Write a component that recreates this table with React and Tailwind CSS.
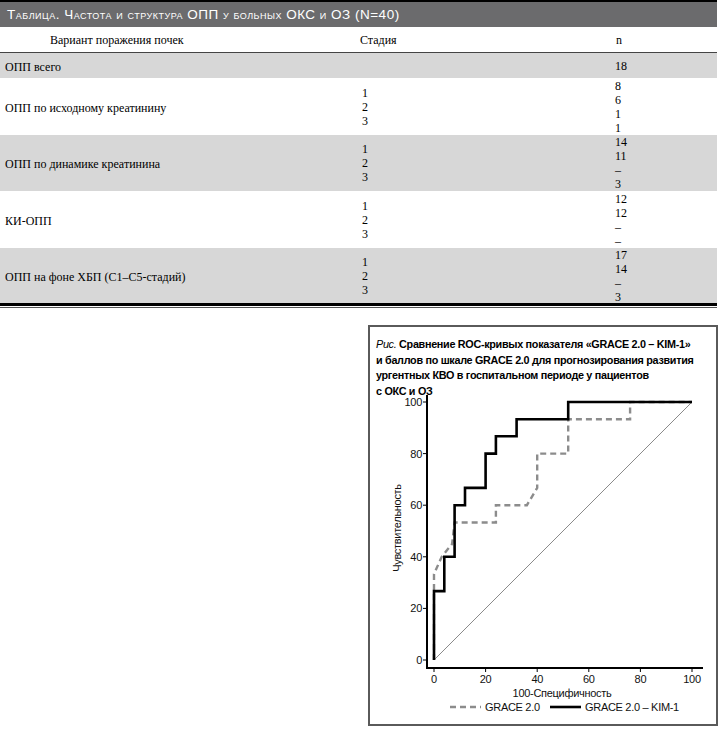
const X = (v) => 434 + v * 2.58
const Y = (v) => 660 - v * 2.58
const pts = (arr) => arr.map(([a, b]) => `${X(a).toFixed(1)},${Y(b).toFixed(1)}`).join(' ')

const rows = [
  { label: 'ОПП всего', stages: [], n: ['18'], cls: 'h-[25px] bg-[#d7d7d7]' },
  { label: 'ОПП по исходному креатинину', stages: ['1', '2', '3'], n: ['8', '6', '1', '1'], cls: 'h-[57px] bg-white' },
  { label: 'ОПП по динамике креатинина', stages: ['1', '2', '3'], n: ['14', '11', '–', '3'], cls: 'h-[56px] bg-[#d7d7d7]' },
  { label: 'КИ-ОПП', stages: ['1', '2', '3'], n: ['12', '12', '–', '–'], cls: 'h-[57px] bg-white' },
  { label: 'ОПП на фоне ХБП (С1–С5-стадий)', stages: ['1', '2', '3'], n: ['17', '14', '–', '3'], cls: 'h-[55px] bg-[#d7d7d7]' },
]

const black = [
  [0, 0], [0, 26.7], [4, 26.7], [4, 40], [8, 40], [8, 60], [12, 60], [12, 66.7], [20, 66.7], [20, 80],
  [24, 80], [24, 86.7], [32, 86.7], [32, 93.3], [52, 93.3], [52, 100], [100, 100],
]

const dashed = [
  [0, 0], [0, 33.3], [3, 40], [7, 45], [8, 53.3], [24, 53.3], [24, 60], [36, 60], [40, 66.7], [40, 80],
  [52, 80], [52, 93.3], [76, 93.3], [76, 100], [100, 100],
]

const ticks = [0, 20, 40, 60, 80, 100]

const Table = () => (
  <div className="w-[717px] font-['Liberation_Serif',serif] text-[12px] leading-[14px] text-black">
    <div className="h-[27px] border-t-2 border-black bg-[#6b6b6d] flex items-center pl-[7px] text-white font-['Liberation_Sans',sans-serif] text-[13.5px] tracking-[0.5px] [font-variant:small-caps]">
      Таблица. Частота и структура ОПП у больных ОКС и ОЗ (N=40)
    </div>
    <div className="h-[26px] border-b border-[#444] grid grid-cols-[358px_255px_1fr] items-center">
      <div className="pl-[50px]">Вариант поражения почек</div>
      <div className="pl-[2px]">Стадия</div>
      <div className="pl-[3px]">n</div>
    </div>
    {rows.map((r) => (
      <div key={r.label} className={`grid grid-cols-[358px_255px_1fr] items-center ${r.cls}`}>
        <div className="pl-[5px] pt-[2px]">{r.label}</div>
        <div className="pl-[4px] flex flex-col">
          {r.stages.map((s, i) => (
            <span key={i}>{s}</span>
          ))}
        </div>
        <div className="pl-[2px] flex flex-col">
          {r.n.map((s, i) => (
            <span key={i}>{s}</span>
          ))}
        </div>
      </div>
    ))}
    <div className="h-[3px] bg-black" />
    <div className="h-px mt-px bg-[#555]" />
  </div>
)

const Chart = () => (
  <div className="ml-[368px] mt-[17px] w-[350px] h-[401px] border-2 border-[#5a5a5a] flex flex-col">
    <div className="h-[63px] pl-[6px] pt-[10px] whitespace-nowrap font-['Liberation_Sans',sans-serif] text-[10.8px] leading-[15.5px] font-bold tracking-[-0.3px] text-black">
      <span className="italic font-normal">Рис.</span> Сравнение ROC-кривых показателя «GRACE 2.0 – KIM-1»
      <br />
      и баллов по шкале GRACE 2.0 для прогнозирования развития
      <br />
      ургентных КВО в госпитальном периоде у пациентов
      <br />с ОКС и ОЗ
    </div>
    <svg width="346" height="334" viewBox="370 390 346 334" className="block">
      <g fontFamily="Liberation Sans, Arial, sans-serif" fontSize="11" fill="#111" letterSpacing="-0.3">
        <line x1={X(0)} y1={Y(0)} x2={X(100)} y2={Y(100)} stroke="#8a8a8a" strokeWidth="1" />
        <polyline points={pts(dashed)} fill="none" stroke="#8c8c8c" strokeWidth="2.4" strokeDasharray="6 4" />
        <polyline points={pts(black)} fill="none" stroke="#000" strokeWidth="2.6" strokeLinejoin="miter" />
        <line x1="427" y1="395" x2="427" y2="669" stroke="#000" strokeWidth="2" />
        <line x1="426" y1="668" x2="703" y2="668" stroke="#000" strokeWidth="2.2" />
        {ticks.map((t) => (
          <g key={t}>
            <line x1="423" y1={Y(t)} x2="427" y2={Y(t)} stroke="#000" strokeWidth="1" />
            <text x="422" y={Y(t) + 4} textAnchor="end">{t}</text>
            <line x1={X(t)} y1="668" x2={X(t)} y2="672" stroke="#000" strokeWidth="1" />
            <text x={X(t)} y="683" textAnchor="middle">{t}</text>
          </g>
        ))}
        <text x="562" y="697" textAnchor="middle">100-Специфичность</text>
        <text x="0" y="0" textAnchor="middle" transform="translate(401 528) rotate(-90)">Чувствительность</text>
        <line x1="450" y1="707" x2="481" y2="707" stroke="#8c8c8c" strokeWidth="2.4" strokeDasharray="6 4" />
        <text x="485" y="711">GRACE 2.0</text>
        <line x1="550" y1="707" x2="581" y2="707" stroke="#000" strokeWidth="2.6" />
        <text x="585" y="711">GRACE 2.0 – KIM-1</text>
      </g>
    </svg>
  </div>
)

export default function App() {
  return (
    <div className="w-[720px] h-[730px] bg-white overflow-hidden">
      <Table />
      <Chart />
    </div>
  )
}
